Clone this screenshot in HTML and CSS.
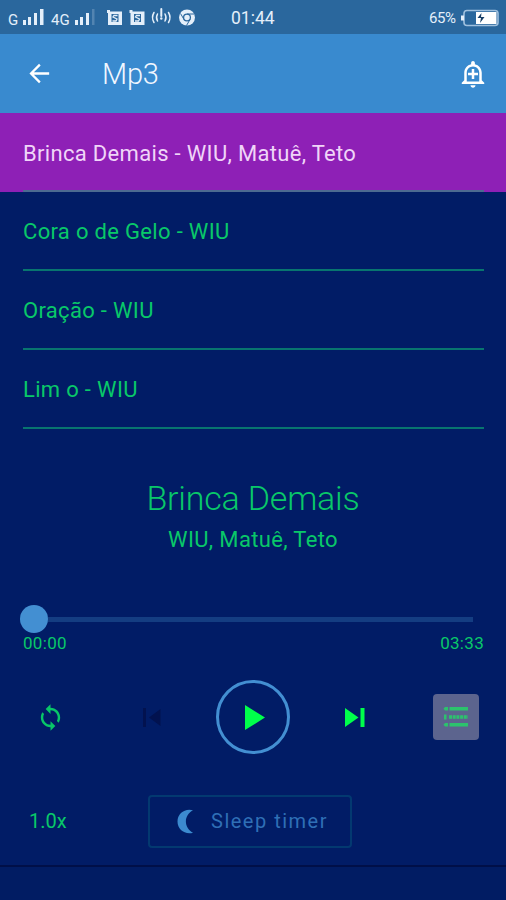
FILE: index.html
```html
<!DOCTYPE html>
<html lang="pt">
<head>
<meta charset="utf-8">
<title>Mp3</title>
<link rel="stylesheet" href="styles.css">
</head>
<body>
<div class="status">
  <div class="status-left">
    <svg width="200" height="34" viewBox="0 0 200 34" fill="#e4effa">
      <text class="net" x="8" y="25">G</text>
      <path d="M23 20h3v5h-3zM28 17h3v8h-3zM34 13h3v12h-3zM40 9h3.500v16H40z"/>
      <text class="net" x="51" y="25">4G</text>
      <path d="M75 20h3v5h-3zM80 17h3v8h-3zM86 13h3v12h-3z"/>
      <path d="M92 9h2.500v16H92z" opacity=".22"/>
      <g id="app"><path d="M107 10h3v1.500h12V25h-14V13h-1z"/><path d="M111.500 14h7v8h-7z" fill="#2a679d"/><path d="M117.500 15.500h-3.500l-1 1.500 4 2-1 2h-3.500" fill="none" stroke="#e4effa" stroke-width="1.300"/></g>
      <use href="#app" x="22.500"/>
      <g fill="none" stroke="#e4effa" stroke-width="1.500" stroke-linecap="round"><path d="M154 12.500q-3 5 0 10M157.500 14q-2 3.500 0 7M168.500 12.500q3 5 0 10M165 14q2 3.500 0 7"/><path d="M161.300 9v7" stroke-width="2"/></g>
      <circle cx="161.300" cy="18.500" r="1.200"/>
      <circle cx="187" cy="17.500" r="8"/>
      <circle cx="187" cy="17.500" r="3.400" fill="none" stroke="#2a679d" stroke-width="1.300"/>
      <path d="M187 14h7M184 19.500l-3.500-6M190 19.500l-3.500 6" stroke="#2a679d" stroke-width="1"/>
    </svg>
  </div>
  <span class="clock">01:44</span>
  <div class="battery">
    <span>65%</span>
    <svg width="39" height="18" viewBox="0 0 39 18"><rect x="4" y="1.500" width="34" height="15" rx="3" fill="none" stroke="#9fc0de" stroke-width="1.600"/><path d="M1 6.500h3v5H1z" fill="#e4effa"/><path d="M16 3h20.500v12H16z" fill="#fff"/><path d="M21.500 4l-4 5h3.500l-1 5 4.500-6h-3.500z" fill="#173e66"/></svg>
  </div>
</div>
<header class="bar">
  <svg class="back" width="29" height="29" viewBox="0 0 24 24"><path d="M20 12H5M12.300 4.700L5 12l7.300 7.300" fill="none" stroke="#fff" stroke-width="1.900"/></svg>
  <h1>Mp3</h1>
  <svg class="bell" width="30" height="30" viewBox="0 0 24 24" fill="#fff"><path d="M10.010 21.010c0 1.100.89 1.990 1.990 1.990s1.990-.89 1.990-1.990h-3.980zM12 6c2.760 0 5 2.240 5 5v7H7v-7c0-2.760 2.240-5 5-5zm0-4.500c-.83 0-1.500.67-1.500 1.500v1.170C7.360 4.850 5 7.650 5 11v6l-2 2v1h18v-1l-2-2v-6c0-3.350-2.360-6.150-5.500-6.830V3c0-.83-.67-1.500-1.500-1.500zM13 8h-2v3H8v2h3v3h2v-3h3v-2h-3V8z"/></svg>
</header>
<ul class="tracks">
  <li class="active"><div><span>Brinca Demais - WIU, Matuê, Teto</span></div></li>
  <li><div><span>Cora o de Gelo - WIU</span></div></li>
  <li><div><span>Oração - WIU</span></div></li>
  <li><div><span>Lim o - WIU</span></div></li>
</ul>
<section class="now">
  <h2>Brinca Demais</h2>
  <p>WIU, Matuê, Teto</p>
</section>
<div class="seek"><i class="thumb"></i><i class="rail"></i></div>
<div class="times"><span>00:00</span><span>03:33</span></div>
<div class="controls">
  <svg width="29" height="29" viewBox="0 0 24 24" fill="#08c668"><path d="M12 4V1L8 5l4 4V6c3.310 0 6 2.690 6 6 0 1.010-.25 1.970-.7 2.800l1.460 1.460C19.540 15.030 20 13.570 20 12c0-4.420-3.580-8-8-8zm0 14c-3.310 0-6-2.690-6-6 0-1.010.25-1.970.7-2.800L5.240 7.740C4.460 8.970 4 10.430 4 12c0 4.420 3.580 8 8 8v3l4-4-4-4v3z"/></svg>
  <svg width="18" height="19" viewBox="0 0 18 19" fill="#02124f"><path d="M0 0h3v19H0zM17.500 1v17L6 9.500z"/></svg>
  <button class="play"><svg width="20" height="25" viewBox="0 0 20 25"><path d="M0 0v25l20-12.500z" fill="#00ff4b"/></svg></button>
  <svg class="next" width="20" height="19" viewBox="0 0 20 19" fill="#00ff4b"><path d="M0 0v19l13.500-9.500zM15.500 0h4v19h-4z"/></svg>
  <button class="list"><svg width="26" height="22" viewBox="0 0 26 22" fill="#2cc36d"><path d="M2 1h3v3.500H2L.5 2.800zM6.500 1H25v3.500H6.500zM2 17h3v3.500H2L.5 18.800zM6.500 17H25v3.500H6.500zM1 8.500h2.500v5H1z"/><path d="M6 11h19" stroke="#2cc36d" stroke-width="3.500" stroke-dasharray="3 .7"/></svg></button>
</div>
<div class="extras">
  <span class="speed">1.0x</span>
  <button class="sleep"><svg width="17" height="25" viewBox="0 0 17 25"><path d="M16 1.300C8-1 .5 4.500.5 12.500S8 26 16 23.700C6.500 18.500 6.500 6.500 16 1.300z" fill="#3c8acf"/></svg><span>Sleep timer</span></button>
</div>
<footer></footer>
</body>
</html>
```
FILE: styles.css
```css
* { box-sizing: border-box; margin: 0; padding: 0; }
body { width: 506px; height: 900px; overflow: hidden; background: #011c66; color: #09c869; font-family: Roboto, "Liberation Sans", sans-serif; display: flex; flex-direction: column; }
svg { display: block; flex: none; }
button { background: none; border: 0; font: inherit; color: inherit; display: flex; align-items: center; justify-content: center; }
.status { height: 34px; background: #2a679d; color: #e4effa; display: grid; grid-template-columns: 200px 1fr 80px; align-items: center; flex: none; }
.net { font-size: 15px; }
.clock { font-size: 17.500px; padding: 2px 0 0 31px; }
.battery { display: flex; align-items: center; gap: 3px; font-size: 15px; padding: 1px 0 0 3px; }
.battery span { width: 28px; letter-spacing: -.4px; padding-top: 1px; }
.bar { height: 79px; background: #398acf; display: flex; align-items: center; padding: 0 18px 0 25px; flex: none; }
.bar h1 { color: #f1f7ff; font-size: 29px; font-weight: 300; margin-left: 48px; padding-top: 1px; letter-spacing: -.2px; }
.bar .bell { margin-left: auto; }
.tracks { list-style: none; flex: none; }
.tracks li { height: 79px; padding: 0 22px 0 23px; }
.tracks div { height: 79px; display: flex; align-items: center; border-bottom: 2px solid #08756f; font-size: 22px; letter-spacing: .32px; padding-top: 1px; }
.tracks .active { background: #8e20b6; color: #f0d5f8; }
.tracks .active div { border-color: #4c6a91; padding-top: 3px; }
.now { text-align: center; height: 171px; padding-top: 48px; flex: none; }
.now h2 { font-size: 34px; font-weight: 300; line-height: 42px; letter-spacing: -.2px; }
.now p { font-size: 22px; line-height: 40px; letter-spacing: .35px; padding-top: 1px; }
.seek { height: 38px; display: flex; align-items: center; padding: 0 33px 0 20px; flex: none; }
.thumb { width: 28px; height: 28px; border-radius: 50%; background: #438fd2; }
.rail { flex: 1; height: 5px; background: #143d82; }
.times { display: flex; justify-content: space-between; padding: 0 22px 0 23px; font-size: 17px; letter-spacing: .3px; line-height: 20px; margin-top: -5px; flex: none; }
.controls { margin-top: 26px; height: 76px; display: grid; grid-template-columns: repeat(5, 1fr); align-items: center; justify-items: center; flex: none; }
.play { width: 74px; height: 74px; border: 3px solid #438fd2; border-radius: 50%; padding-left: 5px; }
.list { width: 46px; height: 46px; border-radius: 4px; background: #5c648e; margin-left: 1px; }
.next { margin-left: 2px; }
.extras { margin-top: 39px; height: 54px; display: flex; align-items: center; padding-left: 29px; flex: none; }
.speed { width: 119px; font-size: 20px; }
.sleep { width: 204px; height: 53px; border: 2px solid #033970; border-radius: 4px; gap: 17px; font-size: 20px; letter-spacing: 1.500px; color: #2f6fb6; padding-left: 5px; }
footer { margin-top: 17px; border-top: 2px solid #000f48; flex: 1; background: #011c63; }
```
